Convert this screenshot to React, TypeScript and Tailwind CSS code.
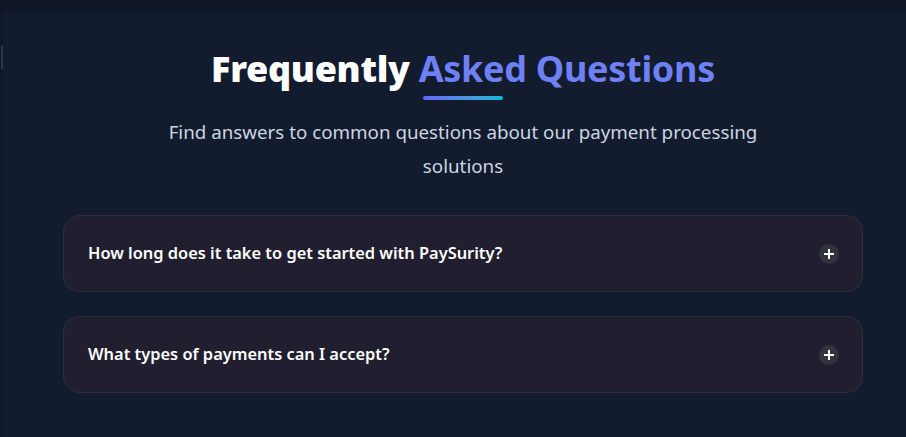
const faqs = [
  'How long does it take to get started with PaySurity?',
  'What types of payments can I accept?',
];

const PlusIcon = () => (
  <span className="flex h-5 w-5 items-center justify-center rounded-full bg-[#33323f]">
    <svg viewBox="0 0 10 10" className="h-[10px] w-[10px]" fill="none" stroke="white" strokeWidth={2}>
      <path d="M5 0v10M0 5h10" />
    </svg>
  </span>
);

export default function App() {
  return (
    <div
      className="flex h-[437px] w-[906px] flex-col overflow-hidden bg-[#0f1627]"
      style={{ fontFamily: '"Noto Sans", "Open Sans", sans-serif' }}
    >
      <div className="h-[11px] shrink-0" />
      <div className="flex flex-1">
        <div className="relative w-[3px] shrink-0 bg-[#10172a]">
          <div className="absolute left-[1px] top-[35px] h-[24px] w-[2px] bg-[#2c3448]" />
        </div>
        <section className="flex flex-1 flex-col items-center bg-[#131b2e] pl-[17px]">
          <h2 className="mt-[35px] text-[36px] leading-[46px] tracking-[-0.3px] text-white">
            <span className="font-black">Frequently</span>{' '}
            <span className="font-bold text-[#6e80f3]">Asked Questions</span>
          </h2>
          <div className="mt-[4px] h-1 w-20 rounded-full bg-gradient-to-r from-[#6366f1] to-[#06b6d4]" />
          <p className="mt-[15px] max-w-[620px] text-center text-[18.75px] leading-[34px] text-[#cbd5e1]">
            Find answers to common questions about our payment processing solutions
          </p>
          <div className="mt-[32px] flex w-[800px] flex-col gap-6">
            {faqs.map((q) => (
              <div
                key={q}
                className="flex h-[77px] items-center justify-between rounded-2xl border border-[#2a2d3d] bg-[#211f2f] pl-6 pr-[23px]"
              >
                <span className="text-[16.4px] font-semibold text-white">{q}</span>
                <PlusIcon />
              </div>
            ))}
          </div>
        </section>
      </div>
    </div>
  );
}
